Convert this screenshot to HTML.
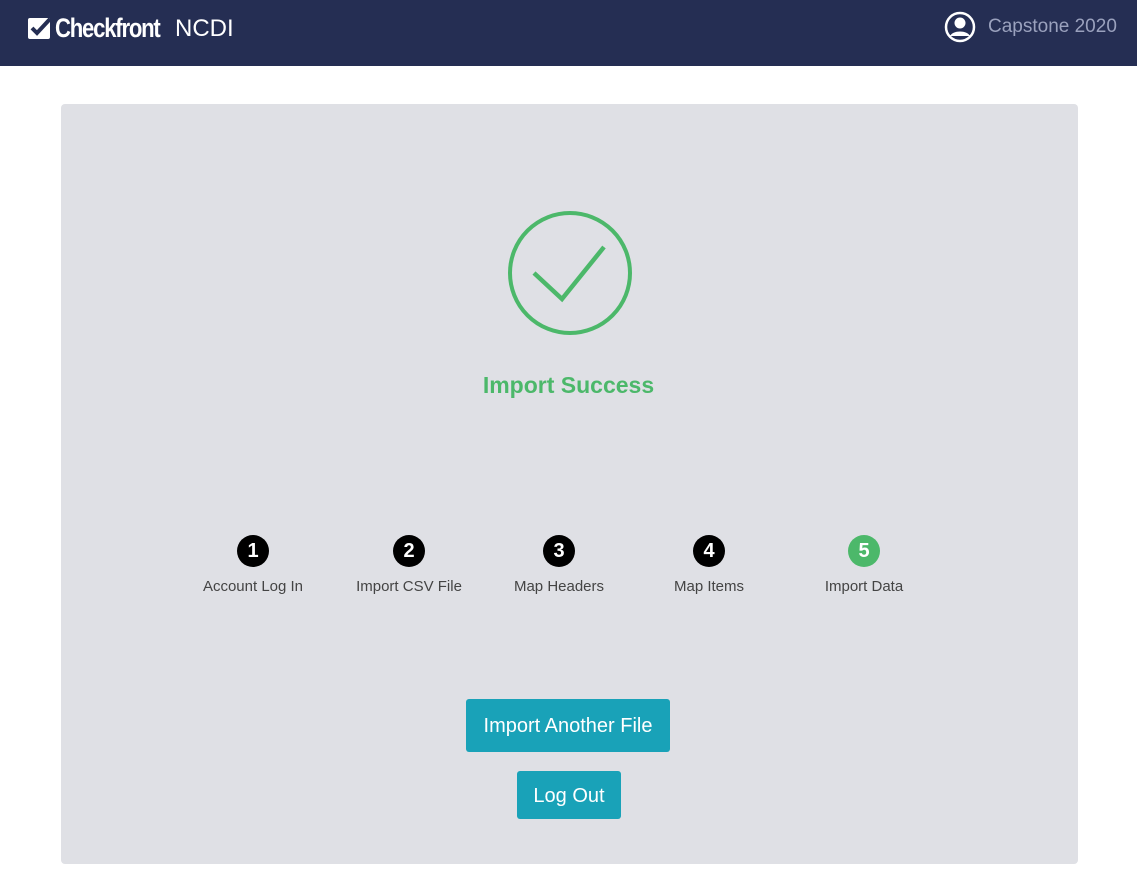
<!DOCTYPE html>
<html><head><style>
body{margin:0;width:1137px;height:869px;background:#fff;font-family:"Liberation Sans",sans-serif;position:relative;overflow:hidden}
.nav{position:absolute;left:0;top:0;width:1137px;height:66px;background:#252e53}
.card{position:absolute;left:61px;top:104px;width:1017px;height:760px;background:#dfe0e5;border-radius:4px}
.step{position:absolute;top:535px;width:140px;text-align:center}
.step .n{width:32px;height:32px;border-radius:50%;background:#000;color:#fff;margin:0 auto;font-weight:bold;font-size:20px;line-height:32px}
.step .l{font-size:15px;color:#444;margin-top:11px}
.btn{position:absolute;background:#19a2b8;color:#fff;font-size:20px;text-align:center;border-radius:3px}
</style></head><body>
<div class="nav">
<svg style="position:absolute;left:28px;top:16px" width="24" height="24" viewBox="0 0 24 24"><rect x="0" y="2" width="22" height="21" rx="2" fill="#fff"/><path d="M4 12l5 5L22 3" stroke="#252e53" stroke-width="4" fill="none"/></svg>
<div style="position:absolute;left:55px;top:13px;color:#fff;font-size:27px;font-weight:bold;letter-spacing:-1.5px;transform:scaleX(0.82);transform-origin:left">Checkfront</div>
<div style="position:absolute;left:175px;top:15px;color:#fff;font-size:24px">NCDI</div>
<svg style="position:absolute;left:944px;top:11px" width="32" height="32" viewBox="0 0 32 32"><circle cx="16" cy="16" r="14" stroke="#fff" stroke-width="2.5" fill="none"/><circle cx="16" cy="12" r="5.5" fill="#fff"/><path d="M6 25c3-6 17-6 20 0" fill="#fff"/></svg>
<div style="position:absolute;left:988px;top:16px;color:#9aa1bd;font-size:19px">Capstone 2020</div>
</div>
<div class="card"></div>
<svg style="position:absolute;left:506px;top:209px" width="128" height="128"><circle cx="64" cy="64" r="60" stroke="#4cb86a" stroke-width="4" fill="none"/><path d="M28 64l28 26 42-52" stroke="#4cb86a" stroke-width="4.5" fill="none"/></svg>
<div style="position:absolute;left:0;width:1137px;top:372px;text-align:center;color:#4cb86a;font-size:23px;font-weight:bold">Import Success</div>
<div class="step" style="left:183px"><div class="n">1</div><div class="l">Account Log In</div></div>
<div class="step" style="left:339px"><div class="n">2</div><div class="l">Import CSV File</div></div>
<div class="step" style="left:489px"><div class="n">3</div><div class="l">Map Headers</div></div>
<div class="step" style="left:639px"><div class="n">4</div><div class="l">Map Items</div></div>
<div class="step" style="left:794px"><div class="n" style="background:#4cb86a">5</div><div class="l">Import Data</div></div>
<div class="btn" style="left:466px;top:699px;width:204px;height:53px;line-height:55px">Import Another File</div>
<div class="btn" style="left:517px;top:771px;width:104px;height:48px;line-height:51px">Log Out</div>
</body></html>
